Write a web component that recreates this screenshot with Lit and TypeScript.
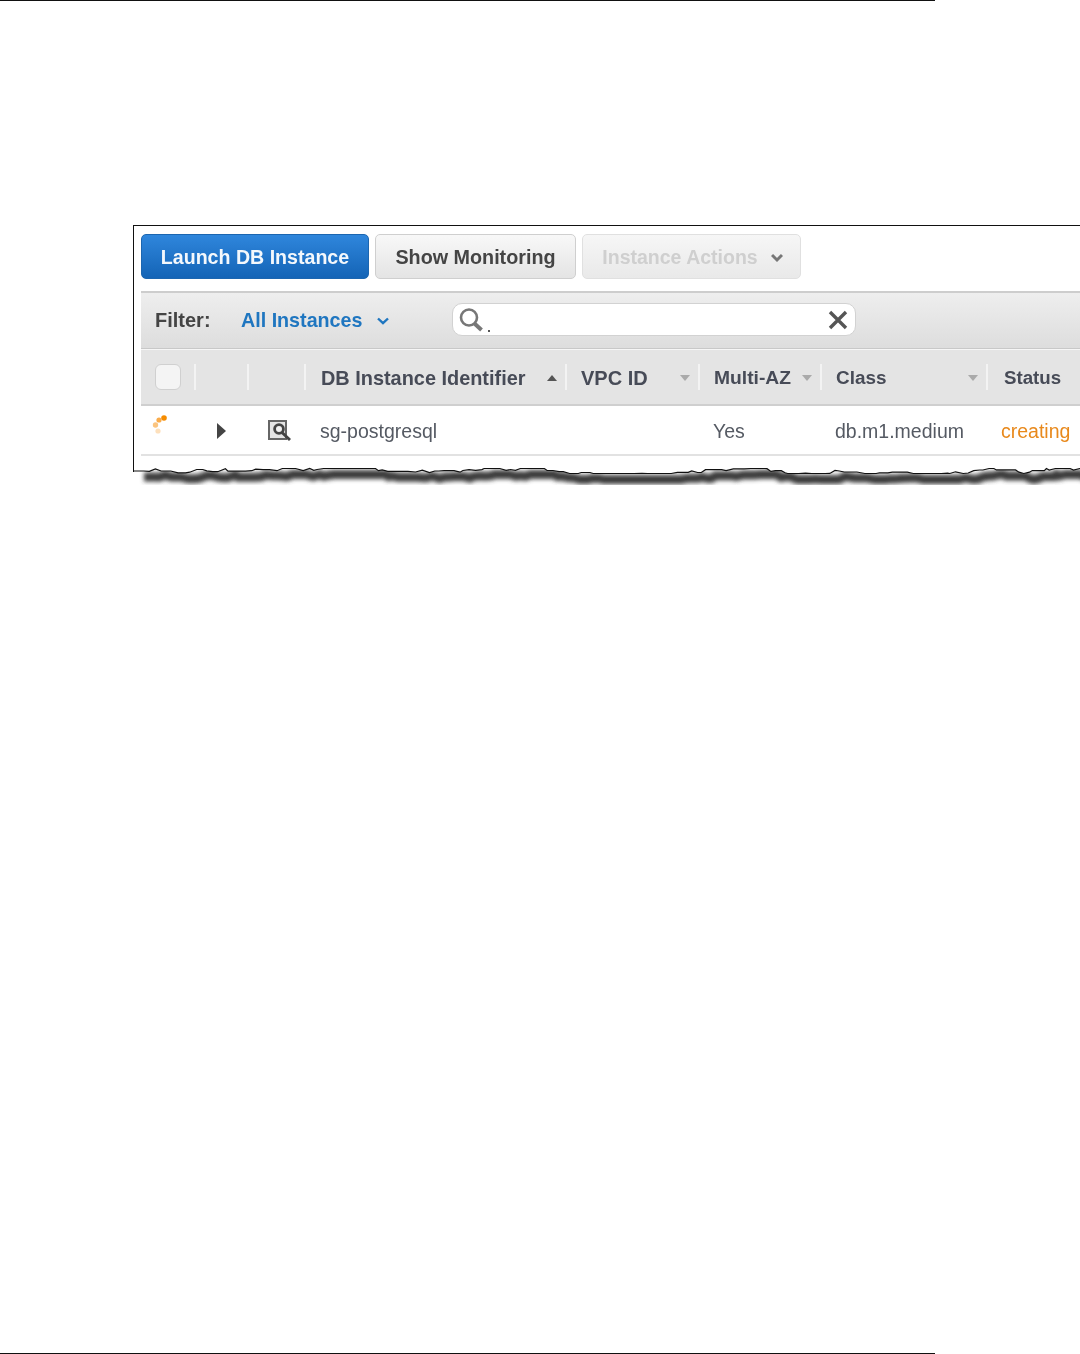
import { LitElement, html, css, svg } from "lit";
import { customElement } from "lit/decorators.js";

function tornPoints(): string {
  let seed = 23;
  const rnd = () => {
    seed = (seed * 9301 + 49297) % 233280;
    return seed / 233280;
  };
  const pts: string[] = ["0,12"];
  let x = 0;
  let y = 12;
  while (x < 950) {
    x += 2 + rnd() * 6;
    const flat = rnd() > 0.55;
    if (!flat) y = Math.max(9.5, Math.min(14.5, y + (rnd() - 0.5) * 6));
    pts.push(`${x.toFixed(1)},${y.toFixed(1)}`);
  }
  return pts.join(" ");
}

const TORN = tornPoints();

@customElement("app-root")
export class AppRoot extends LitElement {
  static styles = css`
    :host {
      display: flex;
      flex-direction: column;
      width: 1080px;
      height: 1354px;
      background: #fff;
      position: relative;
      overflow: hidden;
      font-family: "Liberation Sans", Arial, sans-serif;
    }
    .rule { width: 935px; height: 1px; background: #111; flex: none; }
    .rule.bottom { margin-top: auto; }
    .frame {
      margin: 224px 0 0 133px;
      width: 947px;
      height: 247px;
      box-sizing: border-box;
      border-top: 1px solid #111;
      border-left: 1px solid #111;
      padding-left: 7px;
      position: relative;
      flex: none;
    }
    .inner { filter: blur(0.45px); }
    .toolbar { display: flex; gap: 6px; padding: 8px 0 12px; }
    .btn {
      height: 45px;
      box-sizing: border-box;
      padding-top: 2px;
      border-radius: 5px;
      display: flex;
      align-items: center;
      justify-content: center;
      font-weight: bold;
      border: 1px solid #cfcfcf;
      background: linear-gradient(#f8f8f8, #e4e4e4);
      color: #444;
    }
    .btn.primary {
      width: 228px;
      font-size: 19.6px;
      background: linear-gradient(#2f86dc, #1464b6);
      border-color: #1c66b0;
      color: #f4f8fc;
    }
    .btn.show { width: 201px; font-size: 19.75px; }
    .btn.actions {
      width: 219px;
      font-size: 19.5px;
      color: #cfcfcf;
      background: linear-gradient(#f6f6f6, #e9e9e9);
      border-color: #e0e0e0;
      gap: 13px;
      padding-left: 2px;
    }
    .filter {
      height: 58px;
      box-sizing: border-box;
      border-top: 2px solid #cdcdcd;
      border-bottom: 1px solid #c8c8c8;
      background: linear-gradient(#eeeeee, #dddddd);
      display: flex;
      align-items: center;
      font-size: 20px;
      font-weight: bold;
      color: #444;
      padding-left: 14px;
    }
    .filter .label { width: 86px; }
    .filter .link { color: #1f76c0; font-size: 19.7px; width: 136px; }
    .filter .chev { width: 75px; display: flex; }
    .search {
      width: 404px;
      height: 33px;
      box-sizing: border-box;
      margin-top: -2px;
      background: #fff;
      border: 1px solid #d2d2d2;
      border-radius: 10px;
      display: flex;
      align-items: center;
      justify-content: space-between;
      padding: 0 6px 0 5px;
    }
    .search .left { display: flex; align-items: flex-end; gap: 4px; }
    .dot { width: 2px; height: 2px; background: #555; margin-bottom: 1px; }
    .grid {
      display: grid;
      grid-template-columns: 55px 53px 57px 261px 133px 122px 166px 1fr;
    }
    .head {
      height: 57px;
      box-sizing: border-box;
      border-top: 1px solid #f6f6f6;
      border-bottom: 2px solid #cfcfcf;
      background: #e4e4e4;
      font-size: 20px;
      font-weight: bold;
      color: #474b57;
      align-items: center;
    }
    .th {
      height: 26px;
      display: flex;
      align-items: center;
      justify-content: space-between;
      box-sizing: border-box;
      border-right: 2px solid #f3f3f3;
      padding: 2px 8px 0 14px;
      white-space: nowrap;
    }
    .th.first { padding-top: 0; }
    .th.id { padding-left: 15px; font-size: 19.9px; }
    .th.multi { font-size: 19.25px; }
    .th.klass { font-size: 18.9px; }
    .th.status { font-size: 18.7px; padding-left: 16px; border-right: none; }
    .box {
      width: 26px;
      height: 26px;
      box-sizing: border-box;
      border: 1px solid #d0d0d0;
      border-radius: 6px;
      background: #f4f4f4;
    }
    .caret {
      width: 0; height: 0; flex: none;
      border-left: 5.5px solid transparent;
      border-right: 5.5px solid transparent;
    }
    .caret.down { border-top: 6px solid #aaa; }
    .caret.up { border-bottom: 6px solid #555; }
    .row {
      height: 50px;
      box-sizing: border-box;
      padding-top: 2px;
      border-bottom: 2px solid #e2e2e2;
      background: #fff;
      font-size: 19.5px;
      color: #555a63;
      align-items: center;
    }
    .td { padding-left: 13px; white-space: nowrap; }
    .td.name { padding-left: 14px; }
    .td.status { color: #e8891c; }
    .icon { display: flex; padding: 0; }
    .icon.spin { padding-left: 11px; margin-top: -12px; }
    .icon.tri { padding-left: 20px; }
    .icon.mag { padding-left: 19px; }
    .torn {
      position: absolute;
      left: 0;
      top: 233px;
      width: 950px;
      height: 40px;
      overflow: visible;
    }
  `;

  private th(label: string, dir: "up" | "down", cls = "") {
    return html`<div class="th ${cls}"><span>${label}</span><span class="caret ${dir}"></span></div>`;
  }

  render() {
    return html`
      <div class="rule"></div>
      <div class="frame">
        <div class="inner">
          <div class="toolbar">
            <div class="btn primary">Launch DB Instance</div>
            <div class="btn show">Show Monitoring</div>
            <div class="btn actions">
              <span>Instance Actions</span>
              <svg width="12" height="10" viewBox="0 0 12 10"><path d="M1 2 6 7l5-5" fill="none" stroke="#777" stroke-width="3"/></svg>
            </div>
          </div>
          <div class="filter">
            <span class="label">Filter:</span>
            <span class="link">All Instances</span>
            <span class="chev"><svg width="12" height="8" viewBox="0 0 12 8"><path d="M1 1.5 6 6.2l5-4.7" fill="none" stroke="#1f76c0" stroke-width="2.4"/></svg></span>
            <div class="search">
              <div class="left">
                <svg width="26" height="26" viewBox="0 0 26 26"><circle cx="11" cy="10.5" r="8" fill="none" stroke="#777" stroke-width="2.6"/><path d="M16.5 16.5 23.5 23" stroke="#777" stroke-width="4"/></svg>
                <span class="dot"></span>
              </div>
              <svg width="22" height="22" viewBox="0 0 22 22"><path d="M3 3 19 19M19 3 3 19" stroke="#555" stroke-width="3.4"/></svg>
            </div>
          </div>
          <div class="grid head">
            <div class="th first"><span class="box"></span></div>
            <div class="th"></div>
            <div class="th"></div>
            ${this.th("DB Instance Identifier", "up", "id")}
            ${this.th("VPC ID", "down")}
            ${this.th("Multi-AZ", "down", "multi")}
            ${this.th("Class", "down", "klass")}
            <div class="th status"><span>Status</span></div>
          </div>
          <div class="grid row">
            <div class="icon spin">
              <svg width="16" height="20" viewBox="0 0 16 20">
                <circle cx="12" cy="3" r="2.8" fill="#f68c00"/>
                <circle cx="7" cy="5" r="2.6" fill="#f9ab4a"/>
                <circle cx="3.5" cy="10" r="2.7" fill="#fbc47f"/>
                <circle cx="6" cy="16" r="2.6" fill="#fde0bc"/>
              </svg>
            </div>
            <div class="icon tri">
              <svg width="11" height="16" viewBox="0 0 11 16"><path d="M1 0 10 8 1 16Z" fill="#444"/></svg>
            </div>
            <div class="icon mag">
              <svg width="24" height="22" viewBox="0 0 24 22">
                <rect x="1" y="1" width="17" height="18" fill="#e4e4e4" stroke="#666" stroke-width="2"/>
                <circle cx="11" cy="9" r="4.4" fill="#f2f2f2" stroke="#444" stroke-width="2.8"/>
                <path d="M14 12.5 22 20" stroke="#444" stroke-width="3"/>
              </svg>
            </div>
            <div class="td name">sg-postgresql</div>
            <div class="td"></div>
            <div class="td">Yes</div>
            <div class="td">db.m1.medium</div>
            <div class="td status">creating</div>
          </div>
        </div>
        <svg class="torn" viewBox="0 0 950 40">
          <defs><filter id="soft" x="-2%" y="-100%" width="104%" height="300%"><feGaussianBlur stdDeviation="2.2"/></filter></defs>
          ${svg`<polyline points="${TORN}" transform="translate(10 6)" fill="none" stroke="#3a3a3a" stroke-width="9" filter="url(#soft)"/>`}
          ${svg`<polygon points="0,0 950,0 950,12 ${TORN.split(" ").reverse().join(" ")}" fill="#fff"/>`}
          ${svg`<polyline points="${TORN}" fill="none" stroke="#111" stroke-width="1.2"/>`}
        </svg>
      </div>
      <div class="rule bottom"></div>
    `;
  }
}
